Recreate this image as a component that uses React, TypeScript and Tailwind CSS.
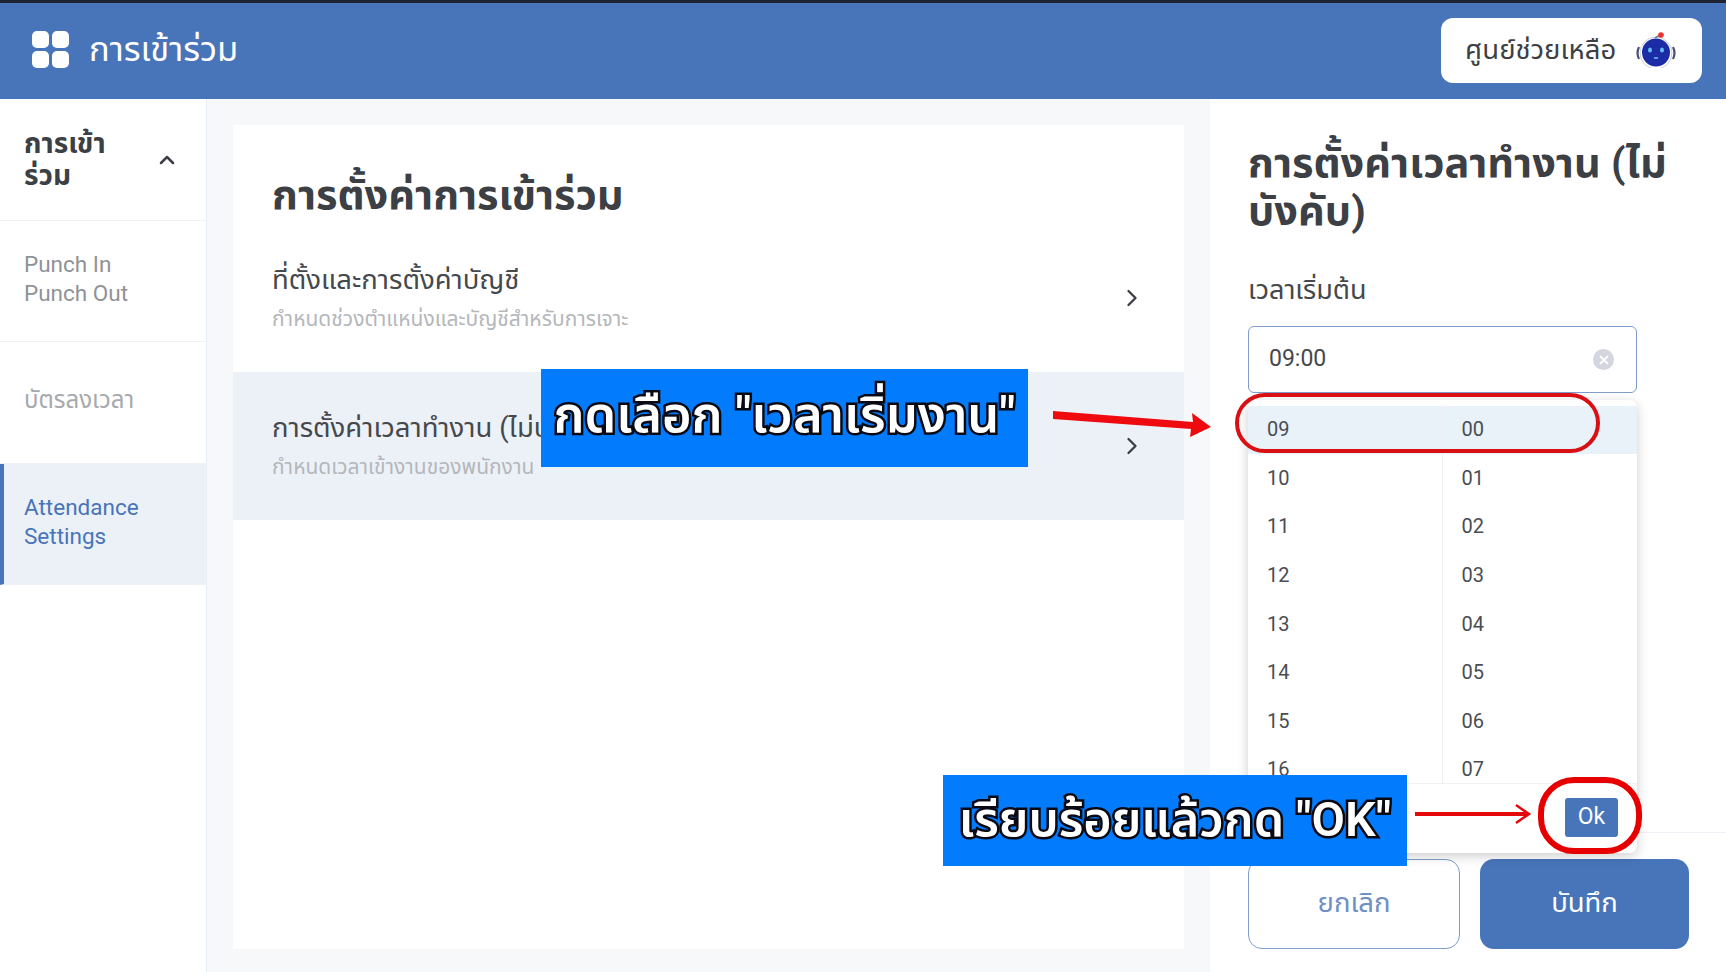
import { ChevronRight, ChevronUp } from 'lucide-react'

const hours = ['09', '10', '11', '12', '13', '14', '15', '16']
const minutes = ['00', '01', '02', '03', '04', '05', '06', '07']

function RobotIcon() {
  return (
    <svg width="40" height="36" viewBox="0 0 40 36">
      <path d="M3 15c-2 4-2 8 0 12M37 15c2 4 2 8 0 12" stroke="#4a5270" strokeWidth="2.2" fill="none" />
      <circle cx="20" cy="21" r="16" fill="#fff" stroke="#c9cede" strokeWidth="1" />
      <circle cx="20" cy="20.5" r="14" fill="#1c2ba6" />
      <ellipse cx="14" cy="18" rx="2" ry="2.6" fill="#62bdf5" />
      <ellipse cx="26" cy="18" rx="2" ry="2.6" fill="#62bdf5" />
      <path d="M18 26h4" stroke="#62bdf5" strokeWidth="1.6" />
      <path d="M19 6l5-3" stroke="#7a7f90" strokeWidth="1.6" />
      <circle cx="25" cy="3" r="2.8" fill="#e5342e" />
    </svg>
  )
}

function SideItem({ lines, active, muted }: { lines: string[]; active?: boolean; muted?: boolean }) {
  return (
    <div
      className={`flex flex-col justify-center border-b border-[#eef1f5] leading-[29px] ${
        muted ? 'h-[122px] pb-[5px] text-[24px]' : 'h-[121px] pb-[5px] text-[22.5px]'
      } ${
        active
          ? 'bg-[#ecf1f8] border-l-4 border-l-[#4874b9] pl-5 text-[#4874b9]'
          : `pl-6 ${muted ? 'text-[#a6a9ad]' : 'text-[#8f9296]'}`
      }`}
    >
      {lines.map((l) => (
        <span key={l}>{l}</span>
      ))}
    </div>
  )
}

function SettingRow({ title, sub, active, height }: { title: string; sub: string; active?: boolean; height: string }) {
  return (
    <div className={`${height} flex items-center justify-between pl-[39px] pr-[38px] ${active ? 'bg-[#ecf1f8]' : ''}`}>
      <div>
        <div className="text-[27.5px] leading-[36px] text-[#45484c]">{title}</div>
        <div className="mt-[6px] text-[21px] leading-[30px] text-[#b4b7bb]">{sub}</div>
      </div>
      <ChevronRight className="w-7 h-7 text-[#3c3f44]" strokeWidth={2} />
    </div>
  )
}

export default function App() {
  return (
    <div className="relative w-[1726px] h-[972px] overflow-hidden bg-white flex flex-col font-['Roboto','Noto_Sans_Thai','Noto_Sans',sans-serif]">
      <div className="h-[3px] bg-[#1d2332]" />
      <header className="h-[96px] bg-[#4874b9] flex items-center justify-between pl-8 pr-6">
        <div className="flex items-center gap-5">
          <div className="grid grid-cols-2 gap-[3px] w-[37px] -mt-[3px]">
            <span className="w-[17px] h-[17px] bg-white rounded-[5px]" />
            <span className="w-[17px] h-[17px] bg-white rounded-[5px]" />
            <span className="w-[17px] h-[17px] bg-white rounded-[5px]" />
            <span className="w-[17px] h-[17px] bg-white rounded-[5px]" />
          </div>
          <span className="text-[34.5px] text-white -mt-[3px]">การเข้าร่วม</span>
        </div>
        <div className="w-[261px] h-[65px] -mt-[2px] bg-white rounded-[12px] flex items-center pl-6 gap-5">
          <span className="text-[27.5px] text-[#3c3f44]">ศูนย์ช่วยเหลือ</span>
          <RobotIcon />
        </div>
      </header>

      <div className="flex-1 flex min-h-0">
        <aside className="w-[207px] border-r border-[#e8eef5] flex flex-col">
          <div className="h-[122px] pl-6 pr-[27px] flex items-center justify-between border-b border-[#eef1f5]">
            <div className="text-[28px] leading-[32px] font-bold text-[#3c3f44]">
              การเข้า
              <br />
              ร่วม
            </div>
            <ChevronUp className="w-6 h-6 text-[#3c3f44]" strokeWidth={2.5} />
          </div>
          <SideItem lines={['Punch In', 'Punch Out']} />
          <SideItem lines={['บัตรลงเวลา']} muted />
          <SideItem lines={['Attendance', 'Settings']} active />
        </aside>

        <main className="flex-1 bg-[#f6f8fa] pt-[26px] px-[26px] pb-[23px]">
          <div className="h-full bg-white">
            <h1 className="pl-[39px] pt-[45px] h-[98px] text-[41.5px] leading-[50px] font-bold text-[#3c3f44]">
              การตั้งค่าการเข้าร่วม
            </h1>
            <SettingRow height="h-[149px]" title="ที่ตั้งและการตั้งค่าบัญชี" sub="กำหนดช่วงตำแหน่งและบัญชีสำหรับการเจาะ" />
            <SettingRow height="h-[148px]" title="การตั้งค่าเวลาทำงาน (ไม่บังคับ)" sub="กำหนดเวลาเข้างานของพนักงาน" active />
          </div>
        </main>

        <section className="w-[516px] flex flex-col pl-[38px] pr-[30px]">
          <h2 className="pt-[40px] text-[41.5px] leading-[48px] font-bold text-[#3c3f44]">
            การตั้งค่าเวลาทำงาน (ไม่บังคับ)
          </h2>
          <div className="mt-[37px] text-[27px] leading-[36px] text-[#45484c]">เวลาเริ่มต้น</div>
          <div className="mt-[18px] w-[389px] h-[67px] border border-[#7f9ccb] rounded-[6px] flex items-center justify-between pl-5 pr-[22px]">
            <span className="text-[23px] text-[#45484c]">09:00</span>
            <span className="w-[21px] h-[21px] rounded-full bg-[#d3d6df] flex items-center justify-center">
              <svg width="10" height="10" viewBox="0 0 10 10">
                <path d="M1 1l8 8M9 1l-8 8" stroke="#fff" strokeWidth="1.8" />
              </svg>
            </span>
          </div>
          <div className="mt-auto mb-[23px] flex gap-5">
            <button className="w-[212px] h-[90px] pb-[2px] border border-[#7f9ccb] rounded-[14px] text-[27.5px] text-[#6f90c4]">ยกเลิก</button>
            <button className="w-[209px] h-[90px] pb-[2px] bg-[#4874b9] rounded-[14px] text-[27.5px] text-white">บันทึก</button>
          </div>
        </section>
      </div>

      {/* footer rule of the panel, behind the dropdown */}
      <div className="absolute left-[1210px] top-[832px] w-[516px] h-px bg-[#eef1f5]" />

      {/* time dropdown */}
      <div className="absolute left-[1248px] top-[400px] w-[389px] h-[453px] bg-white rounded-[8px] shadow-[0_3px_12px_rgba(0,0,0,0.2)] overflow-hidden flex flex-col">
        <div className="flex-1 min-h-0 pt-[5px] overflow-hidden relative">
          <div className="absolute left-0 right-0 top-[6px] h-[48px] bg-[#e9f1f9]" />
          <div className="relative grid grid-cols-2">
            <div className="border-r border-[#eef0f3]">
              {hours.map((h) => (
                <div key={h} className="h-[48.6px] flex items-center pl-[19px] text-[20px] text-[#4a4d52]">{h}</div>
              ))}
            </div>
            <div>
              {minutes.map((m) => (
                <div key={m} className="h-[48.6px] flex items-center pl-[19px] text-[20px] text-[#4a4d52]">{m}</div>
              ))}
            </div>
          </div>
        </div>
        <div className="h-[70px] bg-white border-t border-[#eef0f3] flex items-center justify-end pr-[19px] pb-[3px]">
          <span className="w-[53px] h-[39px] bg-[#4874b9] rounded-[3px] flex items-center justify-center text-[23px] text-white">Ok</span>
        </div>
      </div>

      {/* annotations */}
      <div className="absolute left-[541px] top-[369px] w-[487px] h-[98px] pb-[6px] bg-[#027bfc] flex items-center justify-center text-[50.5px] font-semibold text-white [-webkit-text-stroke:5px_#0a0a14] [paint-order:stroke_fill]">
        กดเลือก "เวลาเริ่มงาน"
      </div>
      <div className="absolute left-[943px] top-[775px] w-[464px] h-[91px] bg-[#027bfc] flex items-center justify-center text-[48.5px] font-semibold text-white [-webkit-text-stroke:5px_#0a0a14] [paint-order:stroke_fill]">
        เรียบร้อยแล้วกด "OK"
      </div>
      <div className="absolute left-[1235px] top-[393px] w-[365px] h-[60px] rounded-[30px] border-[4px] border-[#d90f14]" />
      <div className="absolute left-[1538px] top-[777px] w-[104px] h-[77px] rounded-[36px] border-[6px] border-[#e60000]" />
      <svg className="absolute left-[1050px] top-[400px]" width="170" height="60" viewBox="0 0 170 60">
        <path d="M3 11L143 22l-1-9 19 14-21 10 1-8L3 19z" fill="#ee0a0f" />
      </svg>
      <svg className="absolute left-[1412px] top-[800px]" width="124" height="28" viewBox="0 0 124 28">
        <path d="M3 14H116" stroke="#e4080d" strokeWidth="4" />
        <path d="M104 5l13 9-13 9" stroke="#e4080d" strokeWidth="2.5" fill="none" />
      </svg>
    </div>
  )
}
